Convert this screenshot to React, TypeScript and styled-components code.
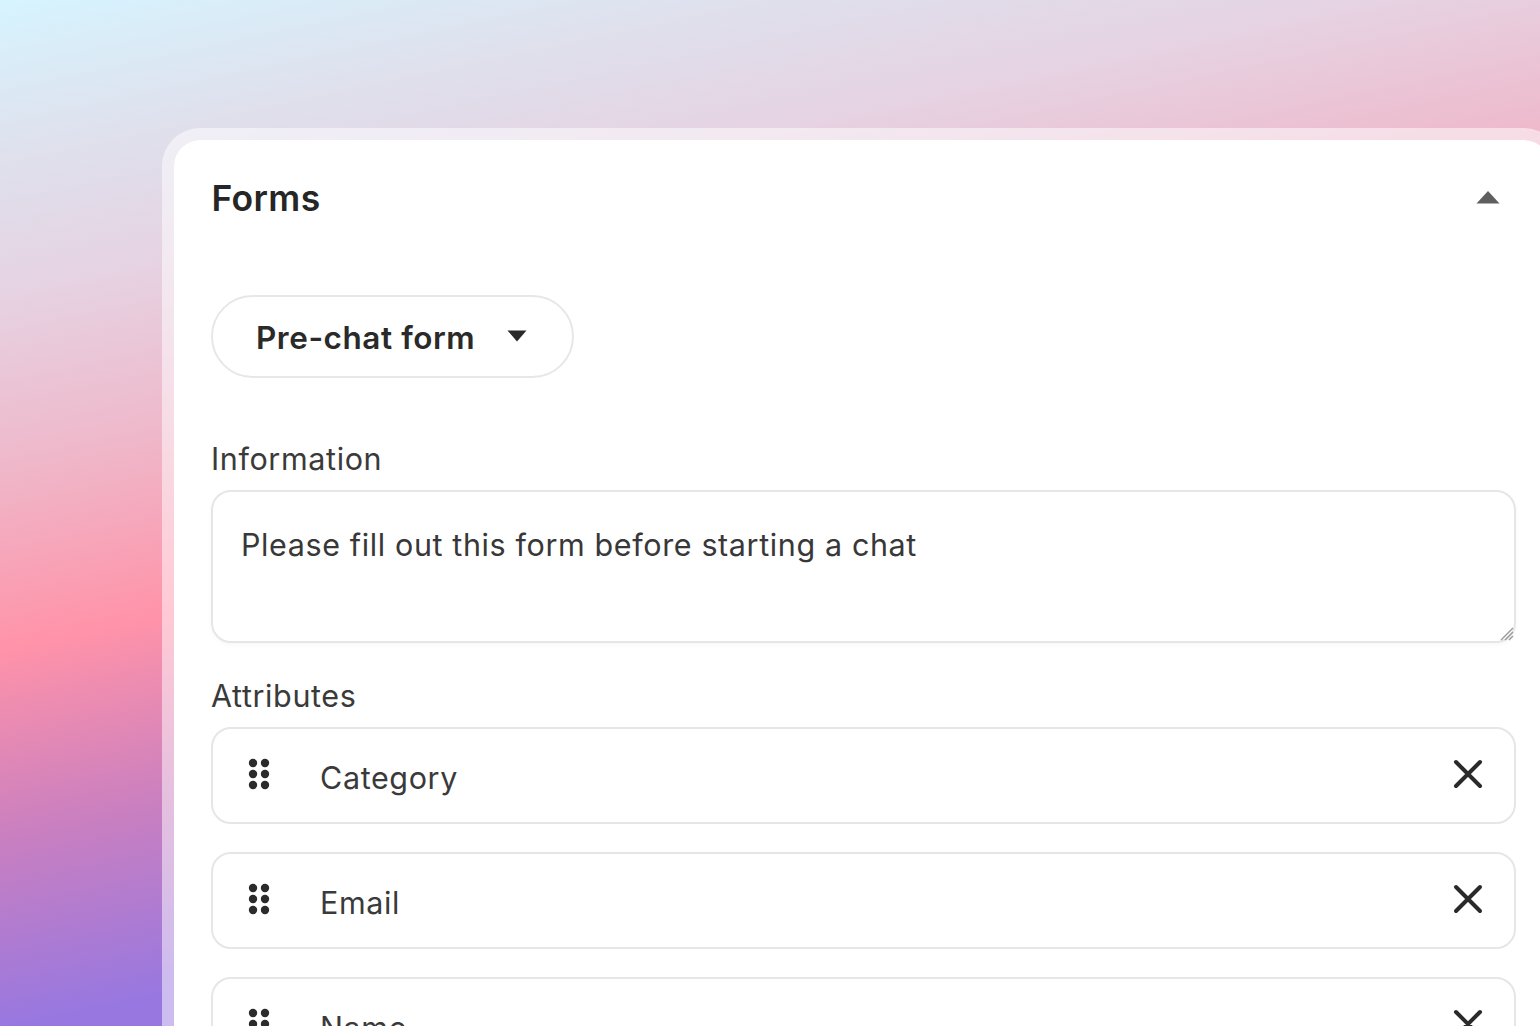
import React from "react";
import styled, { createGlobalStyle } from "styled-components";

const Global = createGlobalStyle`
  html, body { margin: 0; padding: 0; height: 100%; }
  body { font-family: Inter, Roboto, "Liberation Sans", sans-serif; color: #2b2b2b; -webkit-font-smoothing: antialiased; }
  * { box-sizing: border-box; }
`;

const Page = styled.div`
  width: 1540px;
  height: 1026px;
  overflow: hidden;
  padding: 128px 0 0 162px;
  background: linear-gradient(168deg, #d6f4ff 0%, #dfe0ec 12%, #e6d2e2 22%, #eeb9cb 34%, #ff93a9 48%, #c97fc0 62%, #9878e0 76%);
`;

const Card = styled.section`
  width: 1400px;
  min-height: 1100px;
  background: #fff;
  background-clip: padding-box;
  border: 12px solid rgba(255, 255, 255, 0.5);
  border-radius: 38px;
  padding: 0 34.5px 0 37px;
`;

const Header = styled.header`
  display: flex;
  align-items: center;
  justify-content: space-between;
  height: 116px;
  padding-right: 15.5px;
`;

const Title = styled.h2`
  margin: 0 0 0 0.5px;
  font-size: 35.5px;
  font-weight: 600;
  letter-spacing: 0.35px;
  color: #262626;
`;

const Pill = styled.button`
  display: flex;
  align-items: center;
  width: 363px;
  height: 83px;
  margin-top: 39px;
  padding: 2px 0 0 43px;
  background: #fff;
  border: 2px solid #e7e7e7;
  border-radius: 42px;
  font: 600 31.5px Inter, sans-serif;
  letter-spacing: 0.55px;
  color: #2a2a2a;
`;

const Label = styled.div`
  font-size: 30.5px;
  letter-spacing: 0.62px;
  line-height: 38px;
  color: #3a3a3a;
`;

const InfoLabel = styled(Label)`
  margin-top: 62px;
  margin-bottom: 12px;
`;

const AttrLabel = styled(Label)`
  margin-top: 34px;
  margin-bottom: 12px;
`;

const Area = styled.div`
  position: relative;
  height: 153px;
  padding: 34px 28px 0;
  border: 2.5px solid #e6e6e6;
  border-radius: 20px;
  font-size: 30.5px;
  letter-spacing: 0.62px;
  line-height: 38px;
  color: #383838;
  box-shadow: 0 2px 4px rgba(0, 0, 0, 0.03);
`;

const Grip = styled.svg`
  position: absolute;
  right: 0;
  bottom: 0;
`;

const List = styled.div`
  display: flex;
  flex-direction: column;
  gap: 28px;
`;

const Row = styled.div`
  display: flex;
  align-items: center;
  height: 97px;
  padding: 0 31px 0 35px;
  border: 2.5px solid #e6e6e6;
  border-radius: 20px;
  font-size: 30.5px;
  letter-spacing: 0.62px;
  color: #3a3a3a;
`;

const RowName = styled.span`
  flex: 1;
  margin-left: 50px;
  padding-top: 3px;
`;

const Dots = () => (
  <svg width="22" height="32" viewBox="0 0 22 32" style={{ marginTop: -3 }}>
    {[5, 16, 27].flatMap((y) =>
      [5, 17].map((x) => <circle key={`${x}-${y}`} cx={x} cy={y} r="4.2" fill="#2b2b2b" />)
    )}
  </svg>
);

const Cross = () => (
  <svg width="30" height="30" viewBox="0 0 30 30" style={{ marginTop: -3 }}>
    <path d="M3 3 L27 27 M27 3 L3 27" stroke="#2a2a2a" strokeWidth="4" strokeLinecap="round" />
  </svg>
);

export default function App() {
  return (
    <Page>
      <Global />
      <Card>
        <Header>
          <Title>Forms</Title>
          <svg width="24" height="14" viewBox="0 0 24 14" style={{ marginTop: -2 }}>
            <path d="M12 1 L23.5 13.5 H0.5 Z" fill="#5f5f5f" />
          </svg>
        </Header>
        <Pill>
          Pre-chat form
          <svg width="20" height="12" viewBox="0 0 20 12" style={{ marginLeft: 32, marginTop: -3 }}>
            <path d="M0.5 0.5 H19.5 L10 11.5 Z" fill="#2a2a2a" />
          </svg>
        </Pill>
        <InfoLabel>Information</InfoLabel>
        <Area>
          Please fill out this form before starting a chat
          <Grip width="14" height="14" viewBox="0 0 14 14">
            <path d="M1 13 L13 1 M5 13 L13 5 M9 13 L13 9" stroke="#9a9a9a" strokeWidth="1.4" />
          </Grip>
        </Area>
        <AttrLabel>Attributes</AttrLabel>
        <List>
          {["Category", "Email", "Name"].map((name) => (
            <Row key={name}>
              <Dots />
              <RowName>{name}</RowName>
              <Cross />
            </Row>
          ))}
        </List>
      </Card>
    </Page>
  );
}
